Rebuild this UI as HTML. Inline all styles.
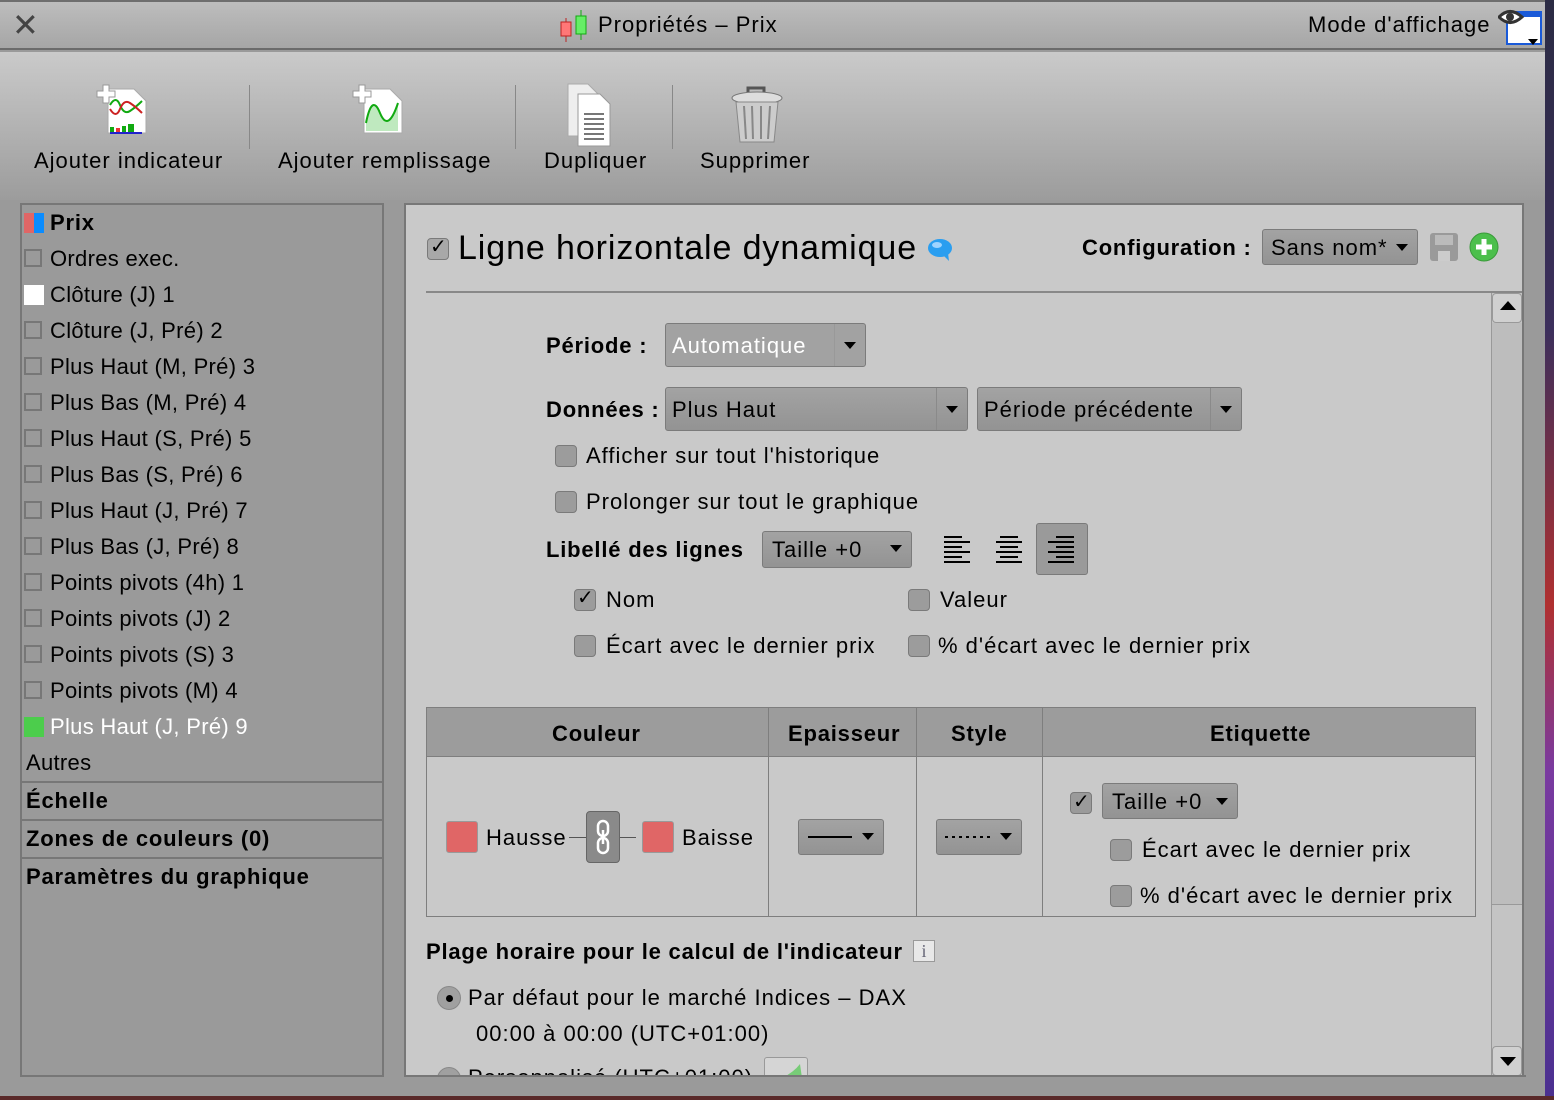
<!DOCTYPE html>
<html><head><meta charset="utf-8"><style>
*{box-sizing:border-box;margin:0;padding:0}
body{width:1554px;height:1100px;overflow:hidden;background:#9a9a9a;font-family:"Liberation Sans",sans-serif;color:#000;position:relative;font-size:22px;letter-spacing:1px}
.a{position:absolute;white-space:nowrap}
.b{font-weight:bold;letter-spacing:0.8px}
.l{letter-spacing:0.3px}
.cb{position:absolute;width:22px;height:22px;border:1px solid #7a7a7a;border-radius:4px;background:#9c9c9c}
.sq{position:absolute;width:18px;height:18px;border:2px solid #777;background:transparent}
.dd{position:absolute;background:linear-gradient(#a3a3a3,#939393);border:1px solid #7b7b7b;border-radius:3px;height:44px}
.tri{position:absolute;width:0;height:0;border-left:6px solid transparent;border-right:6px solid transparent;border-top:7px solid #000}
.vl{position:absolute;width:1px;background:#7e7e7e}
.hl{position:absolute;height:1px;background:#7e7e7e}
</style></head><body>
<div class="a" style="left:0;top:0;width:1545px;height:50px;background:linear-gradient(#bdbdbd,#a6a6a6);border-top:2px solid #6e6e6e;border-bottom:2px solid #6b6b6b"></div>
<div class="a" style="left:12px;top:6px;font-size:32px;color:#444">✕</div>
<svg class="a" style="left:558px;top:8px" width="34" height="34"><line x1="8" y1="10" x2="8" y2="34" stroke="#b22"/><rect x="3" y="14" width="10" height="14" fill="#f77" stroke="#b22"/><line x1="23" y1="2" x2="23" y2="32" stroke="#1a1"/><rect x="18" y="8" width="10" height="18" fill="#6e6" stroke="#1a1"/></svg>
<div class="a" style="left:598px;top:12px;font-size:22px">Propriétés – Prix</div>
<div class="a" style="left:1308px;top:12px;font-size:22px">Mode d'affichage</div>
<svg class="a" style="left:1498px;top:6px" width="46" height="40"><rect x="9" y="6" width="34" height="32" fill="#fff" stroke="#1a5ad8" stroke-width="2"/><rect x="9" y="6" width="34" height="5" fill="#1a5ad8"/><path d="M1 11 Q12 0 24 11 Q12 22 1 11Z" fill="#fff" stroke="#333" stroke-width="3"/><circle cx="12" cy="11" r="4" fill="#333"/><path d="M30 33 L40 33 L35 39Z" fill="#000"/></svg>
<div class="a" style="left:0;top:52px;width:1545px;height:148px;background:linear-gradient(#cacaca,#9c9c9c)"></div>
<svg class="a" style="left:96px;top:83px" width="60" height="60"><path d="M12 6h26l12 12v32H12z" fill="#fff" stroke="#aaa"/><path d="M14 22q6 -10 10 0t10 6t12 -10" stroke="#1a1" fill="none" stroke-width="2"/><path d="M14 26q6 10 10 0t10 -6t12 10" stroke="#c22" fill="none" stroke-width="2"/><rect x="14" y="44" width="4" height="5" fill="#1a1"/><rect x="20" y="45" width="4" height="4" fill="#e33"/><rect x="26" y="43" width="4" height="6" fill="#1a1"/><rect x="32" y="41" width="6" height="8" fill="#1a1"/><rect x="14" y="49" width="32" height="2" fill="#22c"/><path d="M7 2h6v6h6v6h-6v6H7v-6H1V8h6z" fill="#fff" stroke="#999"/></svg>
<div class="a" style="left:34px;top:148px">Ajouter indicateur</div>
<div class="vl" style="left:249px;top:85px;height:64px;background:#888"></div>
<svg class="a" style="left:352px;top:83px" width="60" height="60"><path d="M12 6h26l12 12v32H12z" fill="#fff" stroke="#aaa"/><path d="M14 48V40q6 -30 14 -10t18 -10V48z" fill="#bfe9bf"/><path d="M14 40q6 -30 14 -10t18 -10" stroke="#1a1" fill="none" stroke-width="2"/><path d="M7 2h6v6h6v6h-6v6H7v-6H1V8h6z" fill="#fff" stroke="#999"/></svg>
<div class="a" style="left:278px;top:148px">Ajouter remplissage</div>
<div class="vl" style="left:515px;top:85px;height:64px;background:#888"></div>
<svg class="a" style="left:564px;top:82px" width="64" height="66"><path d="M4 2h20l10 10v42H4z" fill="#eee" stroke="#aaa"/><path d="M14 12h22l10 10v42H14z" fill="#fff" stroke="#999"/><g stroke="#777" stroke-width="2"><line x1="20" y1="32" x2="40" y2="32"/><line x1="20" y1="37" x2="40" y2="37"/><line x1="20" y1="42" x2="40" y2="42"/><line x1="20" y1="47" x2="40" y2="47"/><line x1="20" y1="52" x2="40" y2="52"/><line x1="20" y1="57" x2="40" y2="57"/></g></svg>
<div class="a" style="left:544px;top:148px">Dupliquer</div>
<div class="vl" style="left:672px;top:85px;height:64px;background:#888"></div>
<svg class="a" style="left:728px;top:84px" width="58" height="62"><path d="M20 10V4h16v6" fill="none" stroke="#555" stroke-width="3"/><ellipse cx="29" cy="14" rx="25" ry="6" fill="#ddd" stroke="#777"/><path d="M8 18l4 40h34l4-40z" fill="#ccc" stroke="#888"/><g stroke="#888" stroke-width="2"><line x1="16" y1="22" x2="18" y2="55"/><line x1="24" y1="22" x2="25" y2="55"/><line x1="33" y1="22" x2="33" y2="55"/><line x1="42" y1="22" x2="40" y2="55"/></g></svg>
<div class="a" style="left:700px;top:148px">Supprimer</div>
<div class="a" style="left:1545px;top:0;width:9px;height:1100px;background:linear-gradient(#2b2b44 0%,#3c2f5c 30%,#b03030 55%,#7a3aa0 70%,#4a3090 100%)"></div>
<div class="a" style="left:0;top:1096px;width:1554px;height:4px;background:#5a2a2a"></div>
<div class="a" style="left:20px;top:203px;width:364px;height:874px;border:2px solid #777;background:#9a9a9a"></div>
<div class="a" style="left:24px;top:213px;width:10px;height:20px;background:#e06666"></div>
<div class="a" style="left:34px;top:213px;width:10px;height:20px;background:#0a8cff"></div>
<div class="a b" style="left:50px;top:210px">Prix</div>
<div class="sq" style="left:24px;top:249px"></div><div class="a l" style="left:50px;top:246px">Ordres exec.</div>
<div class="a" style="left:24px;top:285px;width:20px;height:20px;background:#fff"></div><div class="a l" style="left:50px;top:282px">Clôture (J) 1</div>
<div class="sq" style="left:24px;top:321px"></div><div class="a l" style="left:50px;top:318px">Clôture (J, Pré) 2</div>
<div class="sq" style="left:24px;top:357px"></div><div class="a l" style="left:50px;top:354px">Plus Haut (M, Pré) 3</div>
<div class="sq" style="left:24px;top:393px"></div><div class="a l" style="left:50px;top:390px">Plus Bas (M, Pré) 4</div>
<div class="sq" style="left:24px;top:429px"></div><div class="a l" style="left:50px;top:426px">Plus Haut (S, Pré) 5</div>
<div class="sq" style="left:24px;top:465px"></div><div class="a l" style="left:50px;top:462px">Plus Bas (S, Pré) 6</div>
<div class="sq" style="left:24px;top:501px"></div><div class="a l" style="left:50px;top:498px">Plus Haut (J, Pré) 7</div>
<div class="sq" style="left:24px;top:537px"></div><div class="a l" style="left:50px;top:534px">Plus Bas (J, Pré) 8</div>
<div class="sq" style="left:24px;top:573px"></div><div class="a l" style="left:50px;top:570px">Points pivots (4h) 1</div>
<div class="sq" style="left:24px;top:609px"></div><div class="a l" style="left:50px;top:606px">Points pivots (J) 2</div>
<div class="sq" style="left:24px;top:645px"></div><div class="a l" style="left:50px;top:642px">Points pivots (S) 3</div>
<div class="sq" style="left:24px;top:681px"></div><div class="a l" style="left:50px;top:678px">Points pivots (M) 4</div>
<div class="a" style="left:24px;top:717px;width:20px;height:20px;background:#4ccd4c"></div><div class="a l" style="left:50px;top:714px;color:#fff">Plus Haut (J, Pré) 9</div>
<div class="a l" style="left:26px;top:750px">Autres</div>
<div class="hl" style="left:22px;top:781px;width:360px;height:2px;background:#777"></div>
<div class="a b" style="left:26px;top:788px">Échelle</div>
<div class="hl" style="left:22px;top:819px;width:360px;height:2px;background:#777"></div>
<div class="a b" style="left:26px;top:826px">Zones de couleurs (0)</div>
<div class="hl" style="left:22px;top:857px;width:360px;height:2px;background:#777"></div>
<div class="a b" style="left:26px;top:864px">Paramètres du graphique</div>
<div class="a" style="left:404px;top:203px;width:1120px;height:874px;border:2px solid #777;background:#c9c9c9"></div>
<div class="cb" style="left:427px;top:238px;background:#a8a8a8"></div>
<div class="a" style="left:430px;top:234px;font-size:20px">✓</div>
<div class="a" style="left:458px;top:229px;font-size:34px;letter-spacing:0.9px">Ligne horizontale dynamique</div>
<svg class="a" style="left:927px;top:237px" width="28" height="26"><ellipse cx="13" cy="11" rx="12" ry="9" fill="#2a9ef0"/><path d="M16 18l6 6-1-8z" fill="#2a9ef0"/><ellipse cx="10" cy="8" rx="5" ry="3" fill="#9fd4ff"/></svg>
<div class="a b" style="left:1082px;top:235px">Configuration :</div>
<div class="dd" style="left:1262px;top:229px;width:156px;height:36px"></div>
<div class="a" style="left:1271px;top:235px">Sans nom*</div>
<div class="tri" style="left:1396px;top:244px"></div>
<svg class="a" style="left:1429px;top:232px" width="30" height="30"><rect x="1" y="1" width="28" height="28" rx="3" fill="#9a9a9a"/><rect x="6" y="3" width="18" height="10" fill="#bbb"/><rect x="9" y="19" width="12" height="10" fill="#ccc"/></svg>
<svg class="a" style="left:1469px;top:232px" width="30" height="30"><circle cx="15" cy="15" r="14" fill="#4cbf4c" stroke="#3a9a3a"/><path d="M15 7v16M7 15h16" stroke="#fff" stroke-width="5"/></svg>
<div class="hl" style="left:426px;top:291px;width:1096px;height:2px;background:#888"></div>
<div class="a" style="left:1491px;top:293px;width:31px;height:782px;background:#c4c4c4;border-left:1px solid #999"></div>
<div class="a" style="left:1492px;top:293px;width:30px;height:30px;border:1px solid #999;border-radius:4px;background:#d0d0d0"></div>
<div class="a" style="left:1500px;top:301px;width:0;height:0;border-left:8px solid transparent;border-right:8px solid transparent;border-bottom:9px solid #000"></div>
<div class="a" style="left:1492px;top:323px;width:30px;height:582px;background:#bdbdbd;border-bottom:1px solid #999"></div>
<div class="a" style="left:1492px;top:1046px;width:30px;height:30px;border:1px solid #999;border-radius:4px;background:#d0d0d0"></div>
<div class="a" style="left:1500px;top:1057px;width:0;height:0;border-left:8px solid transparent;border-right:8px solid transparent;border-top:9px solid #000"></div>
<div class="a b" style="left:546px;top:333px">Période :</div>
<div class="dd" style="left:665px;top:323px;width:201px;background:#a2a2a2"></div>
<div class="a" style="left:672px;top:333px;color:#fff">Automatique</div>
<div class="vl" style="left:834px;top:324px;height:42px;background:#999"></div>
<div class="tri" style="left:844px;top:342px"></div>
<div class="a b" style="left:546px;top:397px">Données :</div>
<div class="dd" style="left:665px;top:387px;width:303px"></div>
<div class="a" style="left:672px;top:397px">Plus Haut</div>
<div class="vl" style="left:936px;top:388px;height:42px;background:#8a8a8a"></div>
<div class="tri" style="left:946px;top:406px"></div>
<div class="dd" style="left:977px;top:387px;width:265px"></div>
<div class="a" style="left:984px;top:397px">Période précédente</div>
<div class="vl" style="left:1210px;top:388px;height:42px;background:#8a8a8a"></div>
<div class="tri" style="left:1220px;top:406px"></div>
<div class="cb" style="left:555px;top:445px"></div><div class="a" style="left:586px;top:443px">Afficher sur tout l'historique</div>
<div class="cb" style="left:555px;top:491px"></div><div class="a" style="left:586px;top:489px">Prolonger sur tout le graphique</div>
<div class="a b" style="left:546px;top:537px">Libellé des lignes</div>
<div class="dd" style="left:762px;top:531px;width:150px;height:37px"></div>
<div class="a" style="left:772px;top:537px">Taille +0</div>
<div class="tri" style="left:890px;top:545px"></div>
<svg class="a" style="left:942px;top:534px" width="32" height="32"><g stroke="#000" stroke-width="2"><line x1="2" y1="3" x2="20" y2="3"/><line x1="2" y1="8" x2="28" y2="8"/><line x1="2" y1="13" x2="20" y2="13"/><line x1="2" y1="18" x2="28" y2="18"/><line x1="2" y1="23" x2="20" y2="23"/><line x1="2" y1="28" x2="28" y2="28"/></g></svg>
<svg class="a" style="left:994px;top:534px" width="32" height="32"><g stroke="#000" stroke-width="2"><line x1="6" y1="3" x2="24" y2="3"/><line x1="2" y1="8" x2="28" y2="8"/><line x1="6" y1="13" x2="24" y2="13"/><line x1="2" y1="18" x2="28" y2="18"/><line x1="6" y1="23" x2="24" y2="23"/><line x1="2" y1="28" x2="28" y2="28"/></g></svg>
<div class="a" style="left:1036px;top:523px;width:52px;height:52px;background:#9a9a9a;border:1px solid #7a7a7a;border-radius:3px"></div>
<svg class="a" style="left:1046px;top:534px" width="32" height="32"><g stroke="#000" stroke-width="2"><line x1="10" y1="3" x2="28" y2="3"/><line x1="2" y1="8" x2="28" y2="8"/><line x1="10" y1="13" x2="28" y2="13"/><line x1="2" y1="18" x2="28" y2="18"/><line x1="10" y1="23" x2="28" y2="23"/><line x1="2" y1="28" x2="28" y2="28"/></g></svg>
<div class="cb" style="left:574px;top:589px"></div><div class="a" style="left:577px;top:585px;font-size:20px">✓</div><div class="a" style="left:606px;top:587px">Nom</div>
<div class="cb" style="left:908px;top:589px"></div><div class="a" style="left:940px;top:587px">Valeur</div>
<div class="cb" style="left:574px;top:635px"></div><div class="a" style="left:606px;top:633px">Écart avec le dernier prix</div>
<div class="cb" style="left:908px;top:635px"></div><div class="a" style="left:938px;top:633px">% d'écart avec le dernier prix</div>
<div class="a" style="left:426px;top:707px;width:1050px;height:210px;border:1px solid #7e7e7e;background:#c9c9c9"></div>
<div class="a" style="left:427px;top:708px;width:1048px;height:49px;background:#9c9c9c;border-bottom:1px solid #7e7e7e"></div>
<div class="vl" style="left:768px;top:708px;height:208px"></div>
<div class="vl" style="left:916px;top:708px;height:208px"></div>
<div class="vl" style="left:1042px;top:708px;height:208px"></div>
<div class="a b" style="left:552px;top:721px">Couleur</div>
<div class="a b" style="left:788px;top:721px">Epaisseur</div>
<div class="a b" style="left:951px;top:721px">Style</div>
<div class="a b" style="left:1210px;top:721px">Etiquette</div>
<div class="a" style="left:446px;top:821px;width:32px;height:32px;background:#e06666;border:1px solid #999;border-radius:3px"></div>
<div class="a" style="left:486px;top:825px">Hausse</div>
<div class="hl" style="left:569px;top:837px;width:18px;background:#555"></div>
<div class="a" style="left:586px;top:811px;width:34px;height:52px;background:#8a8a8a;border:1px solid #666;border-radius:4px"></div>
<svg class="a" style="left:594px;top:818px" width="18" height="38"><rect x="4" y="3" width="10" height="15" rx="5" fill="none" stroke="#fff" stroke-width="2.5"/><rect x="4" y="20" width="10" height="15" rx="5" fill="none" stroke="#fff" stroke-width="2.5"/><line x1="9" y1="12" x2="9" y2="26" stroke="#fff" stroke-width="2.5"/></svg>
<div class="hl" style="left:620px;top:837px;width:16px;background:#555"></div>
<div class="a" style="left:642px;top:821px;width:32px;height:32px;background:#e06666;border:1px solid #999;border-radius:3px"></div>
<div class="a" style="left:682px;top:825px">Baisse</div>
<div class="dd" style="left:798px;top:819px;width:86px;height:36px"></div>
<div class="hl" style="left:808px;top:836px;width:44px;height:2px;background:#000"></div>
<div class="tri" style="left:862px;top:833px"></div>
<div class="dd" style="left:936px;top:819px;width:86px;height:36px"></div>
<svg class="a" style="left:945px;top:834px" width="46" height="6"><line x1="0" y1="3" x2="46" y2="3" stroke="#000" stroke-width="2" stroke-dasharray="3 4"/></svg>
<div class="tri" style="left:1000px;top:833px"></div>
<div class="cb" style="left:1070px;top:792px;background:#9a9a9a"></div><div class="a" style="left:1073px;top:789px;font-size:20px">✓</div>
<div class="dd" style="left:1102px;top:783px;width:136px;height:36px"></div>
<div class="a" style="left:1112px;top:789px">Taille +0</div>
<div class="tri" style="left:1216px;top:798px"></div>
<div class="cb" style="left:1110px;top:839px"></div><div class="a" style="left:1142px;top:837px">Écart avec le dernier prix</div>
<div class="cb" style="left:1110px;top:885px"></div><div class="a" style="left:1140px;top:883px">% d'écart avec le dernier prix</div>
<div class="a b" style="left:426px;top:939px">Plage horaire pour le calcul de l'indicateur</div>
<div class="a" style="left:913px;top:940px;width:22px;height:22px;border:1px solid #999;background:#e8e8e8;font-family:'Liberation Serif',serif;font-size:18px;color:#667;text-align:center;line-height:20px;letter-spacing:0">i</div>
<div class="a" style="left:437px;top:986px;width:24px;height:24px;border-radius:50%;background:#a0a0a0;border:1px solid #888"></div>
<div class="a" style="left:446px;top:995px;width:7px;height:7px;border-radius:50%;background:#000"></div>
<div class="a" style="left:468px;top:985px">Par défaut pour le marché Indices – DAX</div>
<div class="a" style="left:476px;top:1021px">00:00 à 00:00 (UTC+01:00)</div>
<div class="a" style="left:437px;top:1067px;width:24px;height:24px;border-radius:50%;background:#a0a0a0;border:1px solid #888"></div>
<div class="a" style="left:468px;top:1065px">Personnalisé (UTC+01:00)</div>
<div class="a" style="left:764px;top:1057px;width:44px;height:30px;border:1px solid #999;border-radius:3px;background:#d5d5d5"></div>
<svg class="a" style="left:780px;top:1064px" width="24" height="14"><path d="M2 14 Q14 8 20 0 L22 14Z" fill="#7c7"/></svg>
<div class="a" style="left:406px;top:1075px;width:1120px;height:21px;background:#9a9a9a;border-top:2px solid #777"></div>
</body></html>
